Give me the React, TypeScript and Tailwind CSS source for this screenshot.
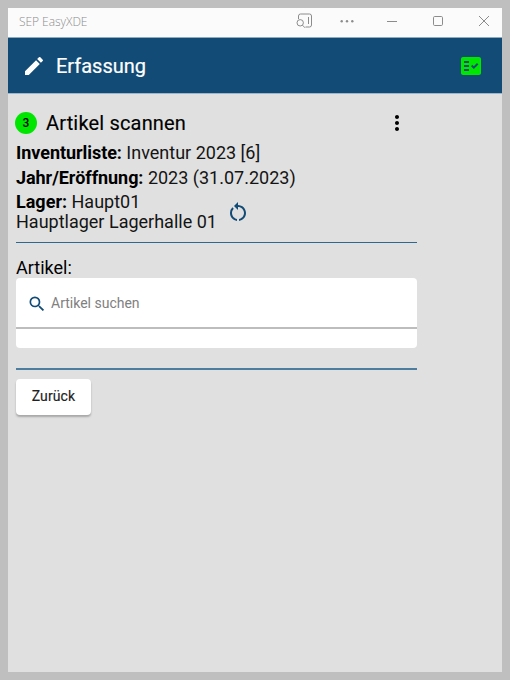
import { MdEdit, MdFactCheck, MdMoreVert, MdRestartAlt, MdSearch } from "react-icons/md";

type Detail = {
  label: string;
  value: string;
};

const details: Detail[] = [
  { label: "Inventurliste:", value: "Inventur 2023 [6]" },
  { label: "Jahr/Eröffnung:", value: "2023 (31.07.2023)" },
];

function TitleBar() {
  return (
    <div className="flex h-[29px] items-center bg-[#fbfbfb] pl-[11px] text-[#8c8c8c]">
      <span className="pb-[2px] font-['Open_Sans',sans-serif] text-[12px] font-light leading-4 tracking-[-0.05px]">
        SEP EasyXDE
      </span>
      <div className="ml-auto flex h-full items-center pb-[4px] pr-[13px]">
        <svg className="mr-[27px] h-4 w-[17px]" viewBox="0 0 17 16" fill="none" stroke="currentColor">
          <path d="M2.5 6V3a2 2 0 0 1 2-2h9a2 2 0 0 1 2 2v9a2 2 0 0 1-2 2H9.5" />
          <path d="M12.5 4v7" />
          <circle cx="4.2" cy="9.8" r="3.2" />
          <path d="M6.5 12.2 9 14.8" />
        </svg>
        <svg className="mr-[33px] h-4 w-[14px]" viewBox="0 0 14 16" fill="currentColor">
          <circle cx="1.7" cy="8.3" r="1.2" />
          <circle cx="7" cy="8.3" r="1.2" />
          <circle cx="12.3" cy="8.3" r="1.2" />
        </svg>
        <svg className="mr-[36px] h-4 w-[10px]" viewBox="0 0 10 16" stroke="currentColor">
          <path d="M0 8.5h10" />
        </svg>
        <svg className="mr-[36px] h-4 w-[10px]" viewBox="0 0 10 16" fill="none" stroke="currentColor">
          <rect x=".5" y="3.5" width="9" height="9" rx="1.2" />
        </svg>
        <svg className="h-4 w-[10px]" viewBox="0 0 10 16" stroke="currentColor">
          <path d="M0 3l10 10M10 3l-10 10" />
        </svg>
      </div>
    </div>
  );
}

export default function App() {
  return (
    <div className="h-[680px] w-[510px] bg-[#bfbfbf] p-2 font-[Roboto,sans-serif] text-black">
      <div className="flex h-full flex-col bg-[#e0e0e0]">
        <TitleBar />

        {/* header */}
        <header className="flex h-[57px] items-center border-y border-t-[#8fabc0] border-b-[#9db5c6] bg-[#124b76] pl-[14px] pr-[19px] text-white">
          <MdEdit className="size-6" />
          <h1 className="ml-[10px] text-[20px] font-normal [-webkit-text-stroke:0.2px]">Erfassung</h1>
          <MdFactCheck className="ml-auto size-6 text-[#00e600]" />
        </header>

        {/* main */}
        <main className="w-[409px] pl-2 pt-4">
          <div className="flex h-[26px] items-center">
            <span className="-ml-px flex size-[22px] items-center justify-center rounded-full bg-[#00e600] text-[12px] font-medium">
              3
            </span>
            <h2 className="ml-[9px] text-[20px] font-normal tracking-[0.17px] [-webkit-text-stroke:0.15px]">
              Artikel scannen
            </h2>
            <MdMoreVert className="ml-auto mr-2 size-6" />
          </div>

          <div className="mt-[4px] text-[18px] text-[#141414]">
            {details.map((detail) => (
              <p key={detail.label} className="h-[25px] leading-[25px]">
                <b className="font-bold tracking-[-0.05px] text-black">{detail.label}</b> {detail.value}
              </p>
            ))}
            <div className="flex items-center pt-[2px]">
              <p className="leading-5">
                <b className="font-bold text-black">Lager:</b> Haupt01
                <br />
                Hauptlager Lagerhalle 01
              </p>
              <MdRestartAlt className="ml-[9px] size-6 text-[#124b76]" />
            </div>
          </div>

          <hr className="mt-[10px] border-t border-[#2f678f]" />

          <label className="mt-[15px] block text-[18px] leading-5">Artikel:</label>
          <div className="h-[70px] rounded-[4px] bg-white">
            <div className="flex h-[51px] items-center border-b-2 border-[#bdbdbd] pl-[11px] pt-[2px]">
              <MdSearch className="size-5 text-[#124b76]" />
              <input
                className="ml-1 w-60 text-[14px] outline-none placeholder:text-[#808080]"
                placeholder="Artikel suchen"
              />
            </div>
          </div>

          <hr className="mt-[20px] border-t-2 border-[#4d7d9e]" />

          <button className="mt-[9px] h-9 w-[75px] rounded-[4px] bg-white pb-[2px] text-[14px] font-normal tracking-[0.1px] text-[#212121] shadow-[0_2px_2px_rgba(0,0,0,0.25)] [-webkit-text-stroke:0.15px]">
            Zurück
          </button>
        </main>
      </div>
    </div>
  );
}
